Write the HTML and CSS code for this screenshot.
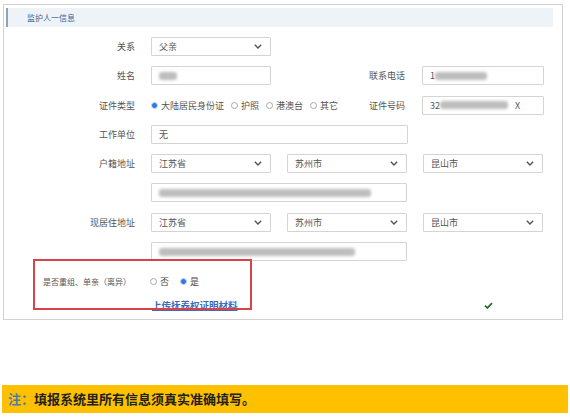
FILE: index.html
```html
<!DOCTYPE html>
<html lang="zh">
<head>
<meta charset="utf-8">
<link rel="stylesheet" href="styles.css">
</head>
<body>
<div class="page">
  <section class="panel">
    <div class="panel-head">监护人一信息</div>
    <div class="form">
      <div class="row">
        <span class="lbl">关系</span>
        <div class="field sel w120"><span class="val">父亲</span><svg class="chev" viewBox="0 0 8 5" width="8" height="5"><path d="M0.8 0.8 L4 4 L7.2 0.8" fill="none" stroke="#555" stroke-width="1.4"/></svg></div>
      </div>
      <div class="row">
        <span class="lbl">姓名</span>
        <div class="field w120"><span class="blur" style="width:18px"></span></div>
        <span class="lbl-r">联系电话</span>
        <div class="field w122"><span class="val">1</span><span class="blur" style="width:52px"></span></div>
      </div>
      <div class="row">
        <span class="lbl">证件类型</span>
        <div class="radios w120">
          <span class="radio on"></span><span class="rtext">大陆居民身份证</span>
          <span class="radio"></span><span class="rtext">护照</span>
          <span class="radio"></span><span class="rtext">港澳台</span>
          <span class="radio"></span><span class="rtext">其它</span>
        </div>
        <span class="lbl-r">证件号码</span>
        <div class="field w122"><span class="val">32</span><span class="blur" style="width:68px"></span><span class="val x">X</span></div>
      </div>
      <div class="row">
        <span class="lbl">工作单位</span>
        <div class="field w257"><span class="val">无</span></div>
      </div>
      <div class="row">
        <span class="lbl">户籍地址</span>
        <div class="field sel w120"><span class="val">江苏省</span><svg class="chev" viewBox="0 0 8 5" width="8" height="5"><path d="M0.8 0.8 L4 4 L7.2 0.8" fill="none" stroke="#555" stroke-width="1.4"/></svg></div>
        <div class="field sel w120 gap"><span class="val">苏州市</span><svg class="chev" viewBox="0 0 8 5" width="8" height="5"><path d="M0.8 0.8 L4 4 L7.2 0.8" fill="none" stroke="#555" stroke-width="1.4"/></svg></div>
        <div class="field sel w120 gap"><span class="val">昆山市</span><svg class="chev" viewBox="0 0 8 5" width="8" height="5"><path d="M0.8 0.8 L4 4 L7.2 0.8" fill="none" stroke="#555" stroke-width="1.4"/></svg></div>
      </div>
      <div class="row">
        <span class="lbl"></span>
        <div class="field w256"><span class="blur" style="width:212px"></span></div>
      </div>
      <div class="row">
        <span class="lbl">现居住地址</span>
        <div class="field sel w120"><span class="val">江苏省</span><svg class="chev" viewBox="0 0 8 5" width="8" height="5"><path d="M0.8 0.8 L4 4 L7.2 0.8" fill="none" stroke="#555" stroke-width="1.4"/></svg></div>
        <div class="field sel w120 gap"><span class="val">苏州市</span><svg class="chev" viewBox="0 0 8 5" width="8" height="5"><path d="M0.8 0.8 L4 4 L7.2 0.8" fill="none" stroke="#555" stroke-width="1.4"/></svg></div>
        <div class="field sel w120 gap"><span class="val">昆山市</span><svg class="chev" viewBox="0 0 8 5" width="8" height="5"><path d="M0.8 0.8 L4 4 L7.2 0.8" fill="none" stroke="#555" stroke-width="1.4"/></svg></div>
      </div>
      <div class="row">
        <span class="lbl"></span>
        <div class="field w256"><span class="blur" style="width:196px"></span></div>
      </div>
    </div>
    <div class="yn">
      <div class="highlight"></div>
      <div class="yn-row">
        <span class="yn-lbl">是否重组、单亲（离异）</span>
        <span class="radio"></span><span class="rtext">否</span>
        <span class="radio on"></span><span class="rtext">是</span>
      </div>
      <div class="link-row">
        <a class="upload" href="#">上传抚养权证明材料</a>
        <svg class="check" viewBox="0 0 10 8" width="9" height="7"><path d="M1 4.2 L3.8 6.8 L9 1.2" fill="none" stroke="#2f6b2a" stroke-width="2"/></svg>
      </div>
    </div>
  </section>
  <div class="note"><span class="note-k">注：</span>填报系统里所有信息须真实准确填写。</div>
</div>
</body>
</html>
```

FILE: styles.css
```css
html, body {
  margin: 0;
  padding: 0;
  background: #fff;
}
body {
  width: 570px;
  height: 418px;
  overflow: hidden;
  font-family: "Noto Sans CJK SC", "Noto Sans", sans-serif;
  color: #555;
}
.page {
  padding-top: 4px;
}
.panel {
  margin-left: 3px;
  width: 560px;
  height: 316px;
  box-sizing: border-box;
  border: 1px solid #d2d2d2;
}
.panel-head {
  margin: 3px 9px 0 2px;
  height: 19px;
  box-sizing: border-box;
  border-left: 2px solid #8fa3ba;
  background: #eef3f8;
  padding-left: 19px;
  font-size: 8px;
  line-height: 19px;
  color: #3f5f8f;
}
.form {
  display: flex;
  flex-direction: column;
  gap: 10.3px;
  margin-top: 10px;
}
.row {
  display: flex;
  align-items: center;
  height: 19px;
  font-size: 9px;
}
.lbl {
  width: 131px;
  margin-right: 16px;
  text-align: right;
  color: #555;
  flex: none;
}
.lbl-r {
  width: 134px;
  margin-right: 17px;
  text-align: right;
  flex: none;
}
.field {
  height: 19px;
  box-sizing: border-box;
  border: 1px solid #d4d4d4;
  border-radius: 1px;
  background: #fff;
  display: flex;
  align-items: center;
  padding-left: 7px;
  padding-right: 8px;
  flex: none;
  position: relative;
}
.w120 { width: 120px; }
.w122 { width: 122px; }
.w256 { width: 256px; }
.w257 { width: 257px; }
.gap { margin-left: 16px; }
.val {
  color: #555;
  white-space: nowrap;
}
.val.x { margin-left: 7px; }
.sel { justify-content: space-between; }
.chev { flex: none; }
.blur {
  display: inline-block;
  height: 8px;
  background: #bdbdbd;
  filter: blur(1.6px);
  border-radius: 3px;
}
.radios {
  display: flex;
  align-items: center;
  white-space: nowrap;
  flex: none;
  overflow: visible;
}
.radio {
  width: 7px;
  height: 7px;
  box-sizing: border-box;
  border-radius: 50%;
  border: 1px solid #a9a9a9;
  background: #fff;
  flex: none;
}
.radio.on {
  border: 1px solid #a9c6ef;
  background: radial-gradient(circle, #2f7ae0 0 2.4px, #fff 2.8px);
}
.rtext {
  margin-left: 3px;
  margin-right: 7px;
  color: #555;
  flex: none;
}
.yn {
  position: relative;
  padding-top: 11px;
}
.highlight {
  position: absolute;
  left: 29px;
  top: -2px;
  width: 219px;
  height: 51px;
  box-sizing: border-box;
  border: 2px solid #d8434a;
}
.yn-row {
  display: flex;
  align-items: center;
  height: 18px;
  padding-left: 39px;
  font-size: 9px;
}
.yn-lbl {
  width: 107px;
  font-size: 8px;
  color: #555;
  flex: none;
}
.yn-row .rtext {
  margin-right: 11px;
  color: #444;
}
.link-row {
  display: flex;
  align-items: center;
  justify-content: space-between;
  height: 14px;
  margin-top: 8px;
  padding-left: 148px;
  padding-right: 69px;
}
.upload {
  font-size: 9.5px;
  font-weight: bold;
  color: #3d6bbf;
  text-decoration: underline;
}
.check { flex: none; }
.note {
  margin: 65px 2px 0 2px;
  height: 28px;
  background: #ffc000;
  padding-left: 6px;
  font-size: 13px;
  line-height: 28px;
  font-weight: bold;
  color: #222;
}
.note-k {
  color: #4f7bb0;
}
```
